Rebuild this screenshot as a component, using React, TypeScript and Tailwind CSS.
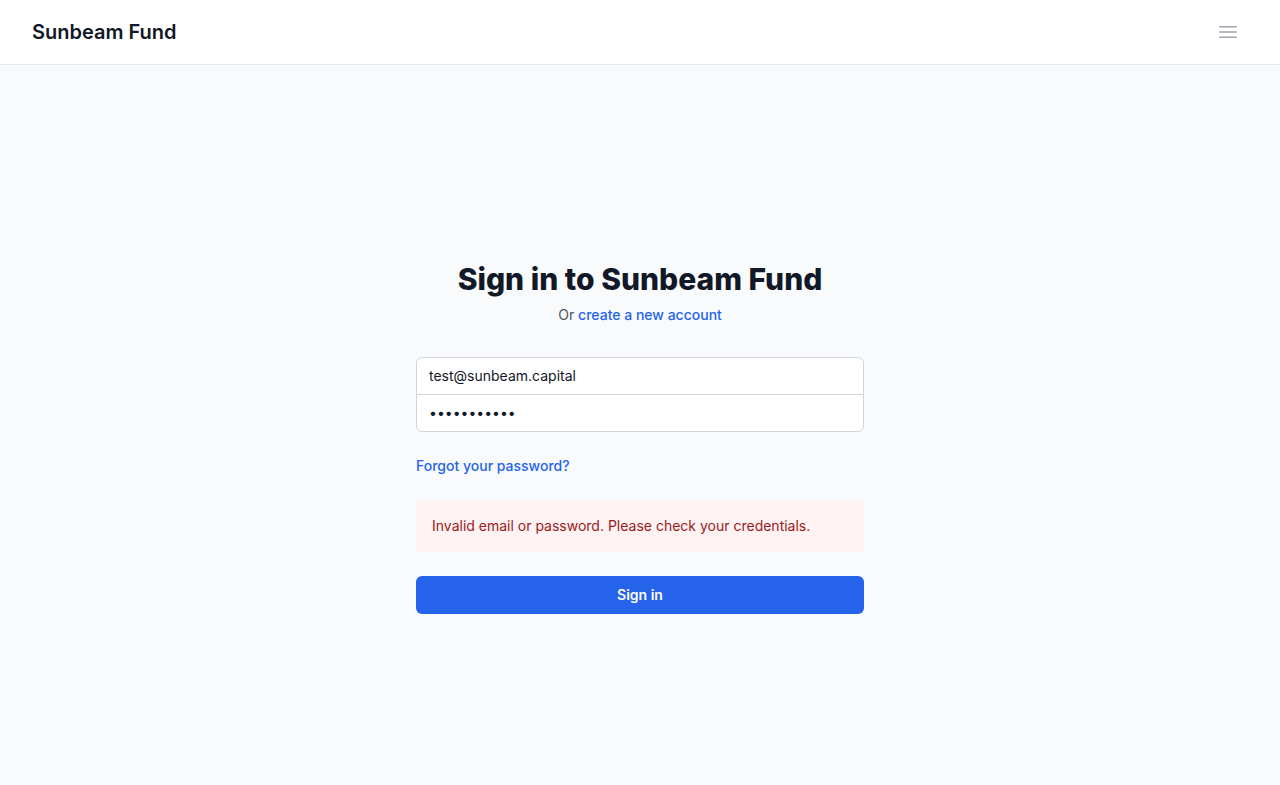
import { useState } from "react";

function MenuIcon() {
    return <svg className="w-6 h-6 text-[#9ca3af]" fill="none" viewBox="0 0 24 24" strokeWidth={1.5} stroke="currentColor">
        <path strokeLinecap="round" strokeLinejoin="round" d="M3.75 6.75h16.5M3.75 12h16.5m-16.5 5.25h16.5" />
    </svg>
}

export default function App() {
    const [email, setEmail] = useState("test@sunbeam.capital");
    const [password, setPassword] = useState("password123");

    return <div className="min-h-screen bg-[#f9fafb] flex flex-col font-['Inter',sans-serif]">
        <header className="bg-white border-b border-[#e5e7eb] h-[65px] px-8 flex flex-row items-center justify-between">
            <h1 className="text-xl font-semibold text-[#111827]">Sunbeam Fund</h1>
            <button className="p-2">
                <MenuIcon />
            </button>
        </header>
        <main className="flex flex-row justify-center pt-[196px]">
            <div className="w-[448px]">
                <h2 className="text-3xl leading-9 font-extrabold text-[#111827] text-center">Sign in to Sunbeam Fund</h2>
                <p className="mt-2 text-sm text-[#4b5563] text-center">
                    Or <a href="#" className="font-medium text-[#2563eb]">create a new account</a>
                </p>
                <form className="mt-8" onSubmit={e => e.preventDefault()}>
                    <div className="-space-y-px rounded-md">
                        <input
                            type="email"
                            value={email}
                            onChange={e => setEmail(e.target.value)}
                            className="block w-full px-3 py-2 text-sm text-[#111827] bg-white border border-[#d1d5db] rounded-t-md outline-none"
                        />
                        <input
                            type="password"
                            value={password}
                            onChange={e => setPassword(e.target.value)}
                            className="block w-full px-3 py-2 text-sm text-[#111827] bg-white border border-[#d1d5db] rounded-b-md outline-none"
                        />
                    </div>
                    <div className="mt-6 text-sm">
                        <a href="#" className="font-medium text-[#2563eb]">Forgot your password?</a>
                    </div>
                    <div className="mt-6 rounded-md bg-[#fef2f2] p-4">
                        <p className="text-sm text-[#991b1b]">Invalid email or password. Please check your credentials.</p>
                    </div>
                    <button type="submit" className="mt-6 w-full rounded-md bg-[#2563eb] py-[9px] text-sm font-semibold text-white">
                        Sign in
                    </button>
                </form>
            </div>
        </main>
    </div>
}
